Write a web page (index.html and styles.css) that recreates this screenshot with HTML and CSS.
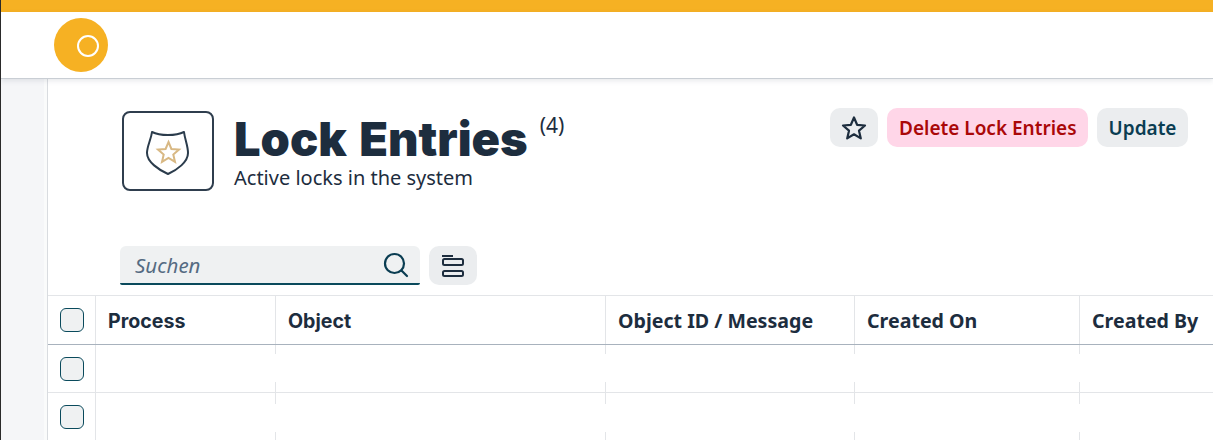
FILE: index.html
```html
<!DOCTYPE html>
<html lang="en">
<head>
    <meta charset="UTF-8">
    <title>Lock Entries</title>
    <link rel="stylesheet" href="styles.css">
</head>
<body>
    <div class="top-strip"></div>
    <header class="shell-bar">
        <div class="avatar">
            <svg width="54" height="54" viewBox="0 0 54 54"><circle cx="34" cy="28" r="10" fill="none" stroke="#fff" stroke-width="2"/></svg>
        </div>
    </header>

    <div class="page">
        <aside class="side-rail"></aside>
        <main class="content">
            <section class="page-head">
                <div class="app-icon">
                    <svg width="44" height="50" viewBox="0 0 44 50">
                        <path d="M6 6 C14 10 30 10 38 6 C39 14 42 20 42 27 C42 36 31 44 22 48 C13 44 1 36 1 27 C1 20 5 14 6 6 Z" fill="none" stroke="#2b3c4c" stroke-width="2" stroke-linejoin="round"/>
                        <path d="M22.5 16 L25.4 23 L33 23.6 L27.3 28.5 L29 35.9 L22.5 32 L16 35.9 L17.7 28.5 L12 23.6 L19.6 23 Z" fill="none" stroke="#d8b883" stroke-width="2"/>
                    </svg>
                </div>
                <div class="title-block">
                    <div class="title-line">
                        <h1>Lock Entries</h1>
                        <span class="count">(4)</span>
                    </div>
                    <p>Active locks in the system</p>
                </div>
                <div class="actions">
                    <button class="btn btn-icon" aria-label="Favorite">
                        <svg width="26" height="26" viewBox="0 0 26 26"><path d="M13 2.5 L16.1 9.8 L24 10.5 L18 15.7 L19.8 23.4 L13 19.3 L6.2 23.4 L8 15.7 L2 10.5 L9.9 9.8 Z" fill="none" stroke="#1d2d3e" stroke-width="2.2" stroke-linejoin="round"/></svg>
                    </button>
                    <button class="btn btn-danger">Delete Lock Entries</button>
                    <button class="btn">Update</button>
                </div>
            </section>

            <section class="filter-bar">
                <div class="search">
                    <span class="search-text">Suchen</span>
                    <svg width="26" height="26" viewBox="0 0 26 26"><circle cx="11.5" cy="11.5" r="9.5" fill="none" stroke="#0a3d52" stroke-width="2.2"/><path d="M18.5 18.5 L24 24" stroke="#0a3d52" stroke-width="2.2" stroke-linecap="round"/></svg>
                </div>
                <button class="btn btn-icon btn-filter" aria-label="Group">
                    <svg width="24" height="24" viewBox="0 0 24 24" fill="none" stroke="#1d2d3e" stroke-width="2"><path d="M1 2 H12"/><rect x="2" y="5" width="20" height="6" rx="1.5"/><rect x="2" y="17" width="20" height="5" rx="1.5"/></svg>
                </button>
            </section>

            <section class="table">
                <div class="row row-head">
                    <div class="cell cell-check"><span class="checkbox"></span></div>
                    <div class="cell cell-brand">Process</div>
                    <div class="cell cell-brand">Object</div>
                    <div class="cell">Object ID / Message</div>
                    <div class="cell">Created On</div>
                    <div class="cell cell-last">Created By</div>
                </div>
                <div class="row row-body">
                    <div class="cell cell-check"><span class="checkbox"></span></div>
                    <div class="cell"><div class="cell-fill"></div></div>
                    <div class="cell"><div class="cell-fill"></div></div>
                    <div class="cell"><div class="cell-fill"></div></div>
                    <div class="cell"><div class="cell-fill"></div></div>
                    <div class="cell cell-last"></div>
                </div>
                <div class="row row-body row-second">
                    <div class="cell cell-check"><span class="checkbox"></span></div>
                    <div class="cell"><div class="cell-fill"></div></div>
                    <div class="cell"><div class="cell-fill"></div></div>
                    <div class="cell"><div class="cell-fill"></div></div>
                    <div class="cell"><div class="cell-fill"></div></div>
                    <div class="cell cell-last"></div>
                </div>
            </section>
        </main>
    </div>
</body>
</html>
```

FILE: styles.css
```css
html, body {
    margin: 0;
    padding: 0;
    height: 100%;
    overflow: hidden;
}

body {
    font-family: "Noto Sans", "Open Sans", sans-serif;
    color: #1d2d3e;
    background-color: #fff;
    border-left: 1px solid #2a2a2a;
    display: flex;
    flex-direction: column;
}

.top-strip {
    height: 12px;
    background-color: #f6b123;
}

.shell-bar {
    height: 66px;
    flex-shrink: 0;
    display: flex;
    align-items: center;
    padding-left: 53px;
    background-color: #fff;
    border-bottom: 1px solid #c9ced4;
    box-shadow: 0 2px 5px rgba(60, 75, 95, 0.12);
    position: relative;
    z-index: 1;
}

.avatar {
    width: 54px;
    height: 54px;
    border-radius: 50%;
    background-color: #f6b123;
}

.avatar svg {
    display: block;
}

.page {
    flex: 1;
    display: flex;
    min-height: 0;
}

.side-rail {
    width: 43px;
    background-color: #f5f6f8;
    border-right: 3px solid #fafbfb;
    flex-shrink: 0;
}

.content {
    flex: 1;
    min-width: 0;
    border-left: 1px solid #d9dce0;
}

.page-head {
    display: flex;
    align-items: flex-start;
    height: 167px;
    padding: 32px 25px 0 74px;
    box-sizing: border-box;
}

.app-icon {
    width: 92px;
    height: 80px;
    box-sizing: border-box;
    border: 2px solid #2f3e4e;
    border-radius: 8px;
    display: flex;
    align-items: center;
    justify-content: center;
    flex-shrink: 0;
}

.title-block {
    margin-left: 20px;
    padding-top: 1px;
    flex: 1;
}

.title-line {
    display: flex;
    align-items: flex-start;
}

h1 {
    margin: 0;
    font-family: "Inter", sans-serif;
    font-weight: 900;
    font-size: 47px;
    word-spacing: 3px;
    line-height: 54px;
    color: #1d2d3e;
}

.count {
    margin-left: 12px;
    margin-top: -1px;
    font-size: 21px;
    line-height: 28px;
}

.title-block p {
    margin: 0;
    font-size: 20px;
    line-height: 24px;
}

.actions {
    display: flex;
    gap: 9px;
    margin-top: -3px;
}

.btn {
    height: 39px;
    padding: 0 11.5px;
    border: none;
    border-radius: 10px;
    background-color: #ebedef;
    color: #0a3d52;
    font-family: inherit;
    font-size: 19px;
    font-weight: 600;
}

.btn-icon {
    width: 48px;
    padding: 0;
    display: flex;
    align-items: center;
    justify-content: center;
}

.btn-danger {
    background-color: #ffd6e8;
    color: #aa0808;
}

.filter-bar {
    display: flex;
    gap: 9px;
    padding-left: 72px;
    height: 49px;
}

.search {
    width: 300px;
    height: 39px;
    box-sizing: border-box;
    display: flex;
    align-items: center;
    justify-content: space-between;
    padding: 0 11px 0 15px;
    background-color: #eff1f2;
    border-bottom: 2px solid #0a4a5c;
    border-radius: 6px 6px 2px 2px;
}

.search-text {
    font-style: italic;
    font-size: 20.5px;
    color: #556b82;
}

.table {
    border-top: 1px solid #e3e5e8;
}

.row {
    display: grid;
    grid-template-columns: 48px 180px 330px 249px 225px 1fr;
}

.row-head {
    height: 48px;
    border-bottom: 1px solid #a8b2bd;
    font-size: 19.6px;
    font-weight: 700;
}

.row-body {
    height: 47px;
    border-bottom: 1px solid #e3e5e8;
}

.cell {
    border-right: 1px solid #e3e5e8;
    display: flex;
    align-items: center;
    padding-left: 12px;
    min-width: 0;
    white-space: nowrap;
}

.cell-brand {
    font-family: "Inter", sans-serif;
    font-weight: 700;
    padding-top: 2px;
}

.cell-last {
    border-right: none;
}

/* cell content paints over the column line, so it only shows above and below */
.cell-fill {
    height: 28px;
    flex: 0 0 calc(100% + 13px);
    margin-left: -12px;
    background-color: #fff;
    position: relative;
}

.row-body .cell {
    align-items: flex-start;
    padding-top: 9px;
    box-sizing: border-box;
}

.row-second .cell {
    padding-top: 11px;
}

.row-body .cell-last {
    padding-top: 0;
}

.row-body .cell-check {
    padding-top: 12px;
}

.checkbox {
    display: block;
    width: 24px;
    height: 24px;
    box-sizing: border-box;
    background-color: #eff1f2;
    border: 1px solid #0a4a5c;
    border-radius: 6px;
}
```
